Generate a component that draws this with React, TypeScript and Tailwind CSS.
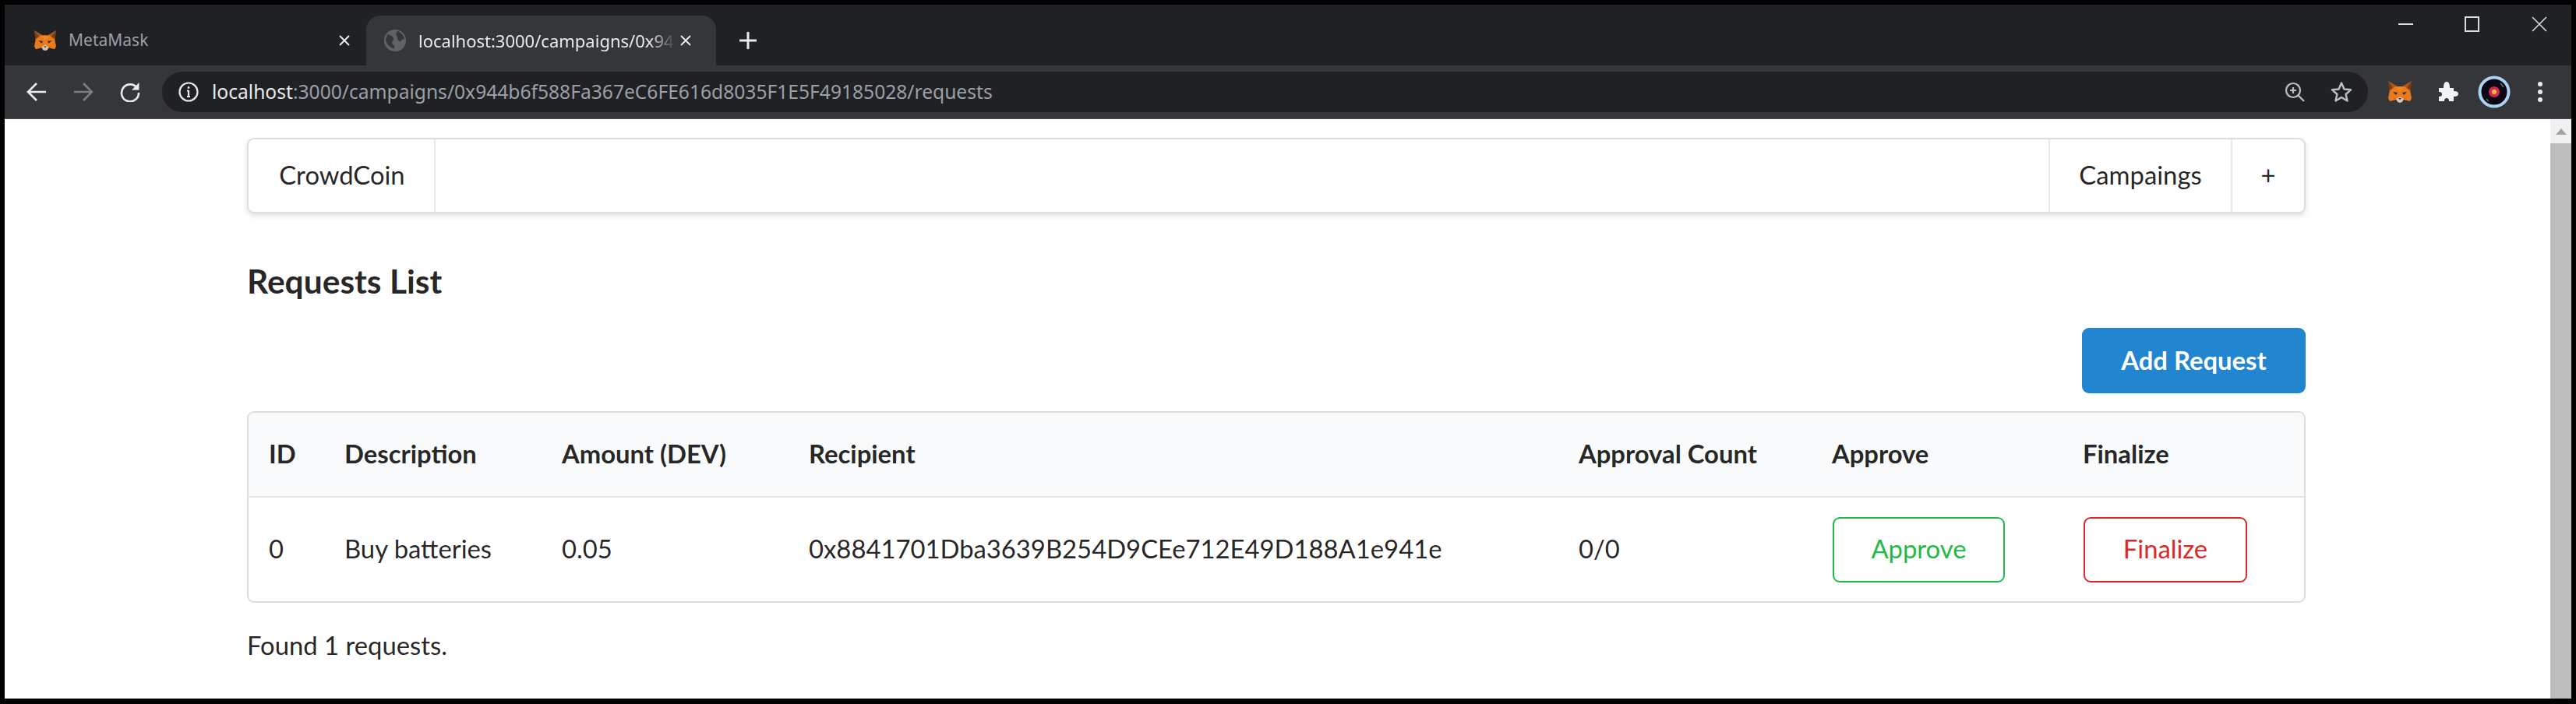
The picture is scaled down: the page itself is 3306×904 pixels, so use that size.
import React from "react";

const Fox = ({ className }: { className?: string }) => (
  <svg viewBox="0 0 32 30" className={className}>
    <polygon points="1,1 13,8 19,8 31,1 29,15 3,15" fill="#a9591c" />
    <polygon points="1,1 8,11 3,15" fill="#763d16" />
    <polygon points="31,1 24,11 29,15" fill="#763d16" />
    <polygon points="3,13 10,8 22,8 29,13 31,23 29,27 21,25 11,25 3,27 1,23" fill="#e8791c" />
    <polygon points="10,9 16,15 22,9 16,8" fill="#f6851b" />
    <polygon points="7,15 13,16 11,19" fill="#3b2a1c" />
    <polygon points="25,15 19,16 21,19" fill="#3b2a1c" />
    <polygon points="11,24 16,21 21,24 19,28 16,29 13,28" fill="#d7c1b3" />
    <polygon points="14,23 18,23 16,25" fill="#23262b" />
  </svg>
);

const Globe = () => (
  <svg viewBox="0 0 32 32" className="w-[30px] h-[30px] shrink-0">
    <circle cx="16" cy="16" r="15" fill="#5f6368" />
    <path d="M6 7 C10 9 12 9 14 13 C15 16 11 17 12 20 C13 23 16 22 15 27 C9 26 4 21 3 15 Z" fill="#35363a" />
    <path d="M19 3 C24 5 28 9 29 14 C25 13 25 18 22 17 C18 15 20 10 17 8 Z" fill="#35363a" />
  </svg>
);

const TabClose = () => (
  <svg viewBox="0 0 14 14" className="w-[14px] h-[14px]" fill="none" stroke="#e8eaed" strokeWidth="2">
    <path d="M1 1 L13 13 M13 1 L1 13" />
  </svg>
);

const Back = ({ color, flip }: { color: string; flip?: boolean }) => (
  <svg viewBox="0 0 26 26" className={flip ? "w-[26px] h-[26px] rotate-180" : "w-[26px] h-[26px]"} fill="none" stroke={color} strokeWidth="2.6">
    <path d="M25 13 H2 M13 2 L2 13 L13 24" />
  </svg>
);

export default function App() {
  return (
    <div className="w-[3306px] h-[904px] bg-black pt-[6px] pl-[6px] pr-[6px] pb-[7px] flex flex-col overflow-hidden font-['Lato',sans-serif]">
      {/* tab strip */}
      <div className="h-[78px] bg-[#202124] flex items-end shrink-0">
        <div className="w-[464px] h-[64px] pl-[37px] pr-[21px] flex items-center font-['Noto_Sans',sans-serif] text-[21px] text-[#9aa0a6]">
          <Fox className="w-[30px] h-[28px] shrink-0" />
          <span className="ml-[15px] flex-1">MetaMask</span>
          <TabClose />
        </div>
        <div className="w-[449px] h-[64px] bg-[#35363a] rounded-t-[18px] pl-[22px] pr-[23px] flex items-center font-['Noto_Sans',sans-serif] text-[22px] text-[#e8eaed]">
          <Globe />
          <span className="ml-[15px] w-[330px] whitespace-nowrap [mask-image:linear-gradient(to_right,black_90%,transparent)]">localhost:3000/campaigns/0x944</span>
          <span className="ml-[6px]"><TabClose /></span>
        </div>
        <div className="h-[64px] flex items-center ml-[30px]">
          <svg viewBox="0 0 22 22" className="w-[22px] h-[22px]" fill="none" stroke="#e8eaed" strokeWidth="3">
            <path d="M11 0 V22 M0 11 H22" />
          </svg>
        </div>
        <div className="flex-1" />
        <div className="self-start h-[50px] flex items-center">
          <div className="w-[19px] h-[2px] bg-[#dadce0]" />
          <div className="ml-[66px] w-[19px] h-[20px] border-2 border-[#dadce0]" />
          <svg viewBox="0 0 20 20" className="ml-[67px] mr-[31px] w-[20px] h-[20px]" fill="none" stroke="#dadce0" strokeWidth="1.6">
            <path d="M1 1 L19 19 M19 1 L1 19" />
          </svg>
        </div>
      </div>
      {/* toolbar */}
      <div className="h-[69px] bg-[#35363a] border-b border-[#494c50] flex items-center shrink-0">
        <div className="ml-[28px]"><Back color="#e8eaed" /></div>
        <div className="ml-[34px]"><Back color="#7c7e82" flip /></div>
        <svg viewBox="0 0 26 26" className="ml-[34px] w-[26px] h-[26px]" fill="none" stroke="#e8eaed" strokeWidth="2.6">
          <path d="M22 8 A11 11 0 1 0 24 14" />
          <path d="M24.5 1 V10.5 H15 Z" fill="#e8eaed" stroke="none" />
        </svg>
        <div className="ml-[28px] flex-1 min-w-0 h-[52px] bg-[#202124] rounded-full flex items-center pl-[21px]">
          <svg viewBox="0 0 26 26" className="w-[26px] h-[26px] shrink-0" fill="none" stroke="#e8eaed" strokeWidth="2.2">
            <circle cx="13" cy="13" r="11.5" />
            <path d="M13 11 V19 M11 11.5 H13 M11 19 H15" />
            <circle cx="13" cy="7.5" r="1.4" fill="#e8eaed" stroke="none" />
          </svg>
          <span className="ml-[17px] font-['Noto_Sans',sans-serif] text-[24.6px] leading-none whitespace-nowrap text-[#9aa0a6]">
            <span className="text-[#e8eaed]">localhost</span>:3000/campaigns/0x944b6f588Fa367eC6FE616d8035F1E5F49185028/requests
          </span>
          <div className="flex-1" />
          <svg viewBox="0 0 26 26" className="w-[26px] h-[26px] shrink-0" fill="none" stroke="#bdc1c6" strokeWidth="2.2">
            <circle cx="11" cy="11" r="9" />
            <path d="M17.5 17.5 L25 25 M11 7 V15 M7 11 H15" />
          </svg>
          <svg viewBox="0 0 28 28" className="ml-[33px] mr-[20px] w-[28px] h-[28px] shrink-0" fill="none" stroke="#bdc1c6" strokeWidth="2.4" strokeLinejoin="round">
            <path d="M14 2.5 L17.5 10.5 L26 11.3 L19.6 17 L21.5 25.5 L14 21 L6.5 25.5 L8.4 17 L2 11.3 L10.5 10.5 Z" />
          </svg>
        </div>
        <Fox className="ml-[25px] w-[32px] h-[30px] shrink-0" />
        <svg viewBox="0 0 28 28" className="ml-[31px] w-[28px] h-[28px] shrink-0" fill="#f1f3f4">
          <path d="M3 9 H9 C9 4 10 1 13 1 C16 1 17 4 17 9 H22 V13 C26 13 28 14 28 16.5 C28 19 26 20 22 20 V26 H16 C16 23 15 22 13 22 C11 22 10 23 10 26 H3 V20 C6 20 7 19 7 17 C7 15 6 14 3 14 Z" />
        </svg>
        <svg viewBox="0 0 42 42" className="ml-[25px] w-[42px] h-[42px] shrink-0">
          <circle cx="21" cy="21" r="18.5" fill="#0a0614" stroke="#a9d3f3" strokeWidth="4" />
          <circle cx="21" cy="21" r="7" fill="#d6265a" />
          <circle cx="21" cy="21" r="3" fill="#fbc02d" />
          <path d="M29 10 L33 15 M11 30 L14 33" stroke="#6b6b7a" strokeWidth="1.5" />
        </svg>
        <div className="ml-[35px] mr-[37px] w-[6px] flex flex-col gap-[4px] shrink-0">
          <div className="w-[6px] h-[6px] rounded-full bg-[#e8eaed]" />
          <div className="w-[6px] h-[6px] rounded-full bg-[#e8eaed]" />
          <div className="w-[6px] h-[6px] rounded-full bg-[#e8eaed]" />
        </div>
      </div>
      {/* page */}
      <div className="flex-1 min-h-0 flex bg-white">
        <div className="flex-1 min-w-0 pl-[311px] pt-[24px] text-[32.8px] leading-none text-[rgba(0,0,0,0.87)]">
          <div className="w-[2642px] h-[97px] flex items-stretch bg-white border-2 border-[rgba(34,36,38,0.15)] rounded-[9px] shadow-[0_3px_6px_rgba(34,36,38,0.15)]">
            <div className="w-[240px] pl-[2px] flex items-center justify-center border-r-2 border-[#e9e9ea]">CrowdCoin</div>
            <div className="flex-1" />
            <div className="w-[234px] flex items-center justify-center border-l-2 border-[#e9e9ea]">Campaings</div>
            <div className="w-[94px] flex items-center justify-center border-l-2 border-[#e9e9ea]">+</div>
          </div>
          <h2 className="mt-[63px] text-[42.5px] leading-[48px] font-bold">Requests List</h2>
          <div className="w-[2642px] mt-[36px] flex justify-end">
            <button className="w-[287px] h-[84px] rounded-[9px] bg-[#2185d0] text-white font-bold">Add Request</button>
          </div>
          <div className="w-[2642px] mt-[23px] border-2 border-[rgba(34,36,38,0.15)] rounded-[9px] overflow-hidden">
            <table className="w-full table-fixed border-collapse">
              <colgroup>
                <col className="w-[97px]" />
                <col className="w-[279px]" />
                <col className="w-[317px]" />
                <col className="w-[988px]" />
                <col className="w-[325px]" />
                <col className="w-[322px]" />
                <col />
              </colgroup>
              <thead>
                <tr className="h-[108px] bg-[#f9fafb] border-b-2 border-[rgba(34,36,38,0.1)] text-left">
                  {["ID", "Description", "Amount (DEV)", "Recipient", "Approval Count", "Approve", "Finalize"].map((h) => (
                    <th key={h} className="pl-[26px] font-bold whitespace-nowrap">{h}</th>
                  ))}
                </tr>
              </thead>
              <tbody>
                <tr className="h-[134px]">
                  <td className="pl-[26px]">0</td>
                  <td className="pl-[26px]">Buy batteries</td>
                  <td className="pl-[26px]">0.05</td>
                  <td className="pl-[26px] whitespace-nowrap">0x8841701Dba3639B254D9CEe712E49D188A1e941e</td>
                  <td className="pl-[26px]">0/0</td>
                  <td className="pl-[27px]">
                    <button className="w-[221px] h-[84px] rounded-[9px] border-2 border-[#21ba45] text-[#21ba45]">Approve</button>
                  </td>
                  <td className="pl-[27px]">
                    <button className="w-[210px] h-[84px] rounded-[9px] border-2 border-[#db2828] text-[#db2828]">Finalize</button>
                  </td>
                </tr>
              </tbody>
            </table>
          </div>
          <p className="mt-[39px]">Found 1 requests.</p>
        </div>
        <div className="w-[27px] shrink-0 flex flex-col bg-[#f1f1f1]">
          <div className="h-[31px] flex items-center justify-center">
            <div className="w-0 h-0 border-l-[7px] border-r-[7px] border-b-[8px] border-l-transparent border-r-transparent border-b-[#a3a3a3]" />
          </div>
          <div className="flex-1 bg-[#bdbdbd]" />
        </div>
      </div>
    </div>
  );
}
